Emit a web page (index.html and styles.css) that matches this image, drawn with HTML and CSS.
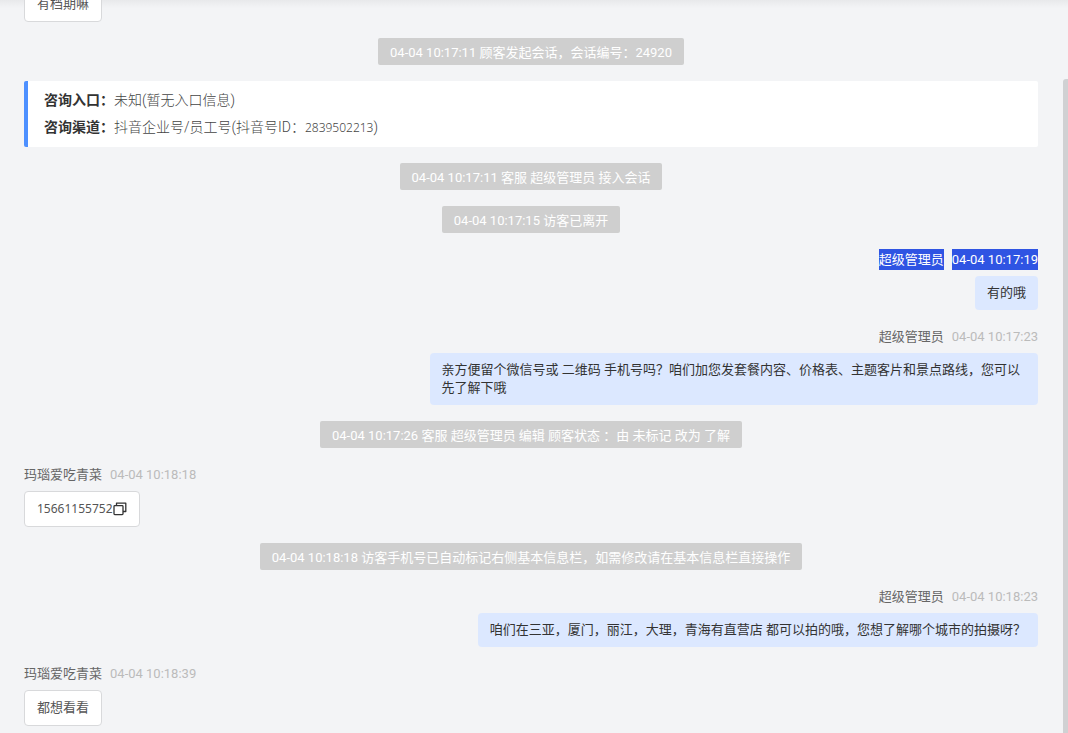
FILE: index.html
```html
<!DOCTYPE html>
<html lang="zh-CN">

<head>
    <meta charset="UTF-8" />
    <title>会话记录</title>
    <link rel="stylesheet" href="styles.css">
</head>

<body>

    <main class="chat">
        <div class="message">
            <div class="bubble">有档期嘛</div>
        </div>

        <div class="notice">04-04 10:17:11 顾客发起会话，会话编号：24920</div>

        <dl class="source">
            <div class="source-row">
                <dt>咨询入口：</dt>
                <dd>未知(暂无入口信息)</dd>
            </div>
            <div class="source-row">
                <dt>咨询渠道：</dt>
                <dd>抖音企业号/员工号(抖音号ID：<span class="digits">2839502213</span>)</dd>
            </div>
        </dl>

        <div class="notice">04-04 10:17:11 客服 超级管理员 接入会话</div>
        <div class="notice">04-04 10:17:15 访客已离开</div>

        <div class="message mine">
            <div class="meta selected">
                <span class="name">超级管理员</span>
                <span class="time">04-04 10:17:19</span>
            </div>
            <div class="bubble">有的哦</div>
        </div>

        <div class="message mine">
            <div class="meta">
                <span class="name">超级管理员</span>
                <span class="time">04-04 10:17:23</span>
            </div>
            <div class="bubble">亲方便留个微信号或 二维码 手机号吗？咱们加您发套餐内容、价格表、主题客片和景点路线，您可以先了解下哦</div>
        </div>

        <div class="notice">04-04 10:17:26 客服 超级管理员 编辑 顾客状态 ：由 未标记 改为 了解</div>

        <div class="message">
            <div class="meta">
                <span class="name">玛瑙爱吃青菜</span>
                <span class="time">04-04 10:18:18</span>
            </div>
            <div class="bubble phone">
                <span class="digits">15661155752</span>
                <button class="copy" type="button" aria-label="复制">
                    <svg width="14" height="14" viewBox="0 0 14 14" fill="none" stroke="#333" stroke-width="1.3">
                        <rect x="1" y="3.6" width="9" height="9" rx="0.8" />
                        <path d="M3.5 3.6V1.2h9.3v8.3H10" stroke-linejoin="round" />
                    </svg>
                </button>
            </div>
        </div>

        <div class="notice">04-04 10:18:18 访客手机号已自动标记右侧基本信息栏，如需修改请在基本信息栏直接操作</div>

        <div class="message mine">
            <div class="meta">
                <span class="name">超级管理员</span>
                <span class="time">04-04 10:18:23</span>
            </div>
            <div class="bubble">咱们在三亚，厦门，丽江，大理，青海有直营店 都可以拍的哦，您想了解哪个城市的拍摄呀？</div>
        </div>

        <div class="message">
            <div class="meta">
                <span class="name">玛瑙爱吃青菜</span>
                <span class="time">04-04 10:18:39</span>
            </div>
            <div class="bubble">都想看看</div>
        </div>
    </main>

    <div class="scroll-thumb"></div>

</body>

</html>
```

FILE: styles.css
```css
* {
    box-sizing: border-box;
}

body {
    margin: 0;
    background: #f3f4f6;
    font-family: Roboto, "Noto Sans CJK SC", sans-serif;
    font-size: 13px;
    line-height: 18px;
    color: #333;
}

/* history is scrolled to the latest message */
.chat {
    display: flex;
    flex-direction: column;
    justify-content: flex-end;
    gap: 16px;
    height: 100vh;
    padding: 0 30px 7px 24px;
    overflow: hidden;
    background: linear-gradient(#e8e9eb, #f3f4f6 8px);
}

.chat > * {
    flex-shrink: 0;
}

.notice {
    align-self: center;
    padding: 2px 12px 0;
    border-radius: 2px;
    background: #cfcfcf;
    color: #fff;
    line-height: 25px;
}

.source {
    margin: 0;
    padding: 6px 16px;
    border-left: 4px solid #4d90ff;
    border-radius: 2px;
    background: #fff;
    font-size: 14px;
    line-height: 27px;
}

.source-row {
    display: flex;
}

.source dt {
    font-weight: bold;
}

.source dd {
    margin: 0;
    color: #444;
    font-weight: 300;
}

.digits {
    font-family: "Noto Sans", sans-serif;
    font-size: 12px;
}

.message {
    display: flex;
    flex-direction: column;
    align-items: flex-start;
    gap: 6px;
}

.message.mine {
    align-items: flex-end;
}

.meta {
    display: flex;
    gap: 8px;
    line-height: 21px;
}

.name {
    color: #666;
}

.time {
    color: #bbb;
}

.selected .name,
.selected .time {
    background: #2f54e3;
    color: #fff;
}

.bubble {
    max-width: 60%;
    padding: 8px 12px;
    border: 1px solid #d8d9db;
    border-radius: 4px;
    background: #fff;
    color: #555;
}

.mine .bubble {
    border: none;
    background: #dce8ff;
    color: #333;
}

.phone {
    display: flex;
    align-items: center;
}

.copy {
    display: flex;
    padding: 0;
    border: none;
    background: none;
    cursor: pointer;
}

.scroll-thumb {
    position: absolute;
    top: 79px;
    right: 0;
    bottom: 0;
    width: 5px;
    border-radius: 3px 0 0 0;
    background: #d0d1d3;
}
```
